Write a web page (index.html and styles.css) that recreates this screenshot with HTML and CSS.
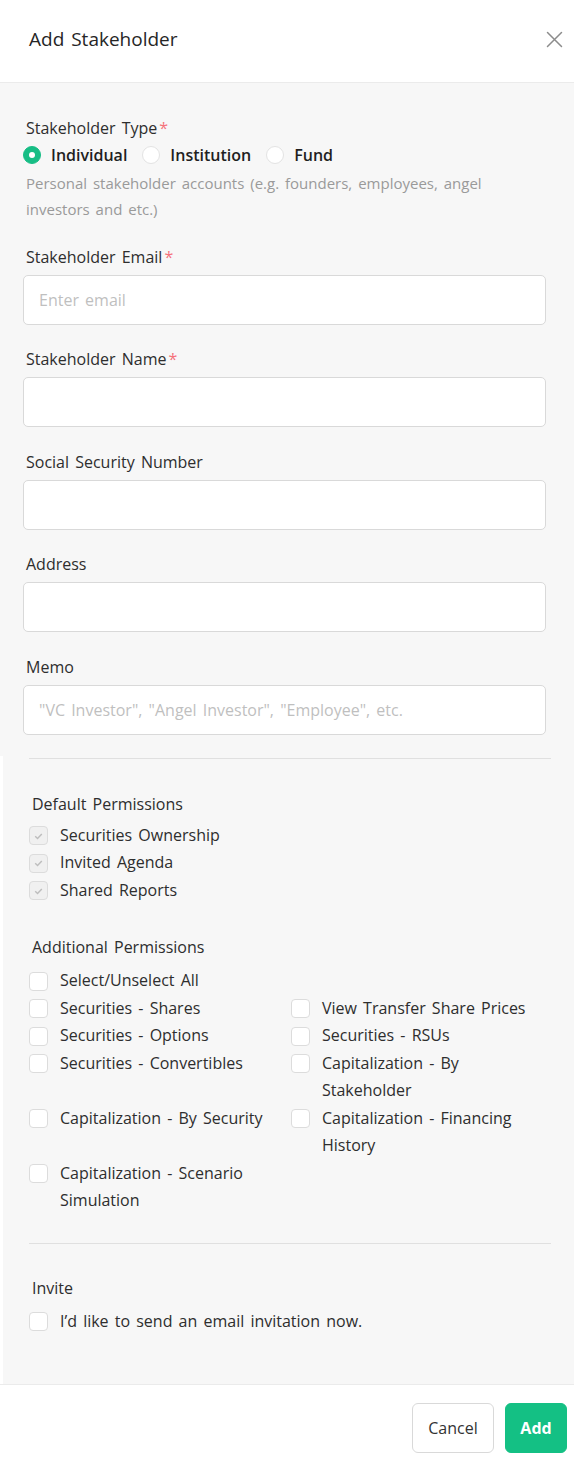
FILE: index.html
```html
<!DOCTYPE html>
<html lang="en">
<head>
<meta charset="utf-8">
<title>Add Stakeholder</title>
<link rel="stylesheet" href="styles.css">
</head>
<body>
<div class="modal">
  <header class="modal-header">
    <h1 class="modal-title">Add Stakeholder</h1>
    <button class="close-btn" type="button" aria-label="Close">
      <svg width="17" height="17" viewBox="0 0 17 17"><path d="M1.5 1.5 L15.5 15.5 M15.5 1.5 L1.5 15.5" stroke="#8c8c8c" stroke-width="1.5" fill="none" stroke-linecap="round"/></svg>
    </button>
  </header>

  <div class="form-main">
    <div class="field-label">Stakeholder Type<span class="req">*</span></div>
    <div class="radio-group">
      <label class="radio-item"><span class="radio checked"></span><span class="radio-text">Individual</span></label>
      <label class="radio-item"><span class="radio"></span><span class="radio-text">Institution</span></label>
      <label class="radio-item"><span class="radio"></span><span class="radio-text">Fund</span></label>
    </div>
    <p class="help">Personal stakeholder accounts (e.g. founders, employees, angel investors and etc.)</p>

    <div class="field">
      <div class="field-label">Stakeholder Email<span class="req">*</span></div>
      <div class="input"><span class="placeholder">Enter email</span></div>
    </div>
    <div class="field">
      <div class="field-label">Stakeholder Name<span class="req">*</span></div>
      <div class="input"></div>
    </div>
    <div class="field">
      <div class="field-label">Social Security Number</div>
      <div class="input"></div>
    </div>
    <div class="field">
      <div class="field-label">Address</div>
      <div class="input"></div>
    </div>
    <div class="field">
      <div class="field-label">Memo</div>
      <div class="input"><span class="placeholder">"VC Investor", "Angel Investor", "Employee", etc.</span></div>
    </div>
  </div>

  <div class="form-perms">
    <hr class="divider">
    <div class="group-title first">Default Permissions</div>
    <div class="check-list">
      <div class="check-item"><span class="checkbox disabled"><svg viewBox="0 0 18 18" width="18" height="18"><path d="M5.5 9.2 L8 11.6 L12.5 6.8" stroke="#bdbdbd" stroke-width="1.5" fill="none"/></svg></span><span class="check-text">Securities Ownership</span></div>
      <div class="check-item"><span class="checkbox disabled"><svg viewBox="0 0 18 18" width="18" height="18"><path d="M5.5 9.2 L8 11.6 L12.5 6.8" stroke="#bdbdbd" stroke-width="1.5" fill="none"/></svg></span><span class="check-text">Invited Agenda</span></div>
      <div class="check-item"><span class="checkbox disabled"><svg viewBox="0 0 18 18" width="18" height="18"><path d="M5.5 9.2 L8 11.6 L12.5 6.8" stroke="#bdbdbd" stroke-width="1.5" fill="none"/></svg></span><span class="check-text">Shared Reports</span></div>
    </div>

    <div class="group-title additional">Additional Permissions</div>
    <div class="check-item"><span class="checkbox"></span><span class="check-text">Select/Unselect All</span></div>
    <div class="check-grid">
      <div class="check-item"><span class="checkbox"></span><span class="check-text">Securities - Shares</span></div>
      <div class="check-item"><span class="checkbox"></span><span class="check-text">View Transfer Share Prices</span></div>
      <div class="check-item"><span class="checkbox"></span><span class="check-text">Securities - Options</span></div>
      <div class="check-item"><span class="checkbox"></span><span class="check-text">Securities - RSUs</span></div>
      <div class="check-item"><span class="checkbox"></span><span class="check-text">Securities - Convertibles</span></div>
      <div class="check-item"><span class="checkbox"></span><span class="check-text">Capitalization - By Stakeholder</span></div>
      <div class="check-item"><span class="checkbox"></span><span class="check-text">Capitalization - By Security</span></div>
      <div class="check-item"><span class="checkbox"></span><span class="check-text">Capitalization - Financing History</span></div>
      <div class="check-item"><span class="checkbox"></span><span class="check-text">Capitalization - Scenario Simulation</span></div>
    </div>

    <hr class="divider second">
    <div class="group-title invite">Invite</div>
    <div class="check-item"><span class="checkbox"></span><span class="check-text">I’d like to send an email invitation now.</span></div>
  </div>

  <footer class="modal-footer">
    <button class="btn btn-default" type="button">Cancel</button>
    <button class="btn btn-primary" type="button">Add</button>
  </footer>
</div>
</body>
</html>
```

FILE: styles.css
```css
* { box-sizing: border-box; }

html, body {
  margin: 0;
  padding: 0;
  background: #ffffff;
}

body {
  font-family: "Open Sans", "Noto Sans", "Noto Sans CJK KR", sans-serif;
  font-size: 16px;
  word-spacing: 2px;
  color: #333333;
}

.modal {
  width: 574px;
  background: #ffffff;
}

.modal-header {
  height: 83px;
  border-bottom: 1px solid #ebebeb;
  display: flex;
  align-items: center;
  justify-content: space-between;
  padding: 0 8px 4px 29px;
}

.modal-title {
  margin: 0;
  font-size: 19px;
  font-weight: 400;
  color: #262626;
  line-height: 26px;
}

.close-btn {
  border: none;
  background: none;
  padding: 0;
  width: 24px;
  height: 24px;
  display: flex;
  align-items: center;
  justify-content: center;
  cursor: pointer;
}

.form-main {
  background: #f7f7f7;
  padding: 33px 28px 21px 23px;
}

.field-label {
  line-height: 24px;
  padding-left: 3px;
  color: #2e2e2e;
}

.req {
  color: #f5727a;
  margin-left: 2px;
}

.radio-group {
  display: flex;
  align-items: center;
  gap: 15px;
  height: 24px;
  margin-top: 3px;
}

.radio-item {
  display: flex;
  align-items: center;
  gap: 10px;
}

.radio {
  width: 18px;
  height: 18px;
  border-radius: 50%;
  background: #ffffff;
  border: 1px solid #e3e3e3;
  position: relative;
}

.radio.checked {
  background: #17bd85;
  border-color: #17bd85;
}

.radio.checked::after {
  content: "";
  position: absolute;
  left: 5px;
  top: 5px;
  width: 6px;
  height: 6px;
  border-radius: 50%;
  background: #ffffff;
}

.radio-text {
  font-weight: 600;
  word-spacing: 0;
  color: #1f1f1f;
}

.help {
  margin: 3px 0 0;
  padding-left: 3px;
  font-size: 15px;
  line-height: 26px;
  color: #9a9a9a;
}

.field {
  margin-top: 22.5px;
}

.input {
  margin-top: 6px;
  height: 50px;
  background: #ffffff;
  border: 1px solid #d9d9d9;
  border-radius: 5px;
  display: flex;
  align-items: center;
  padding: 0 15px;
}

.placeholder {
  color: #bfbfbf;
}

.form-perms {
  background: #f7f7f7;
  margin-left: 3px;
  padding: 2px 23px 49px 26px;
}

.divider {
  border: none;
  border-top: 1px solid #e0e0e0;
  margin: 0;
}

.divider.second {
  margin-top: 28px;
}

.group-title {
  line-height: 24px;
  padding-left: 3px;
  margin-top: 33px;
  margin-bottom: 6px;
  color: #2e2e2e;
}

.group-title.additional {
  margin-top: 31px;
  margin-bottom: 8px;
}

.group-title.invite {
  margin-top: 32px;
  margin-bottom: 8px;
}

.check-item {
  display: flex;
  align-items: flex-start;
  gap: 12px;
  line-height: 27.5px;
}

.checkbox {
  flex: 0 0 19px;
  width: 19px;
  height: 19px;
  margin-top: 4.5px;
  background: #ffffff;
  border: 1px solid #dcdcdc;
  border-radius: 4px;
  display: flex;
  align-items: center;
  justify-content: center;
}

.checkbox.disabled {
  background: #f0f0f0;
  border-color: #dcdcdc;
}

.checkbox svg {
  display: block;
}

.check-text {
  color: #2e2e2e;
}

.check-grid {
  display: grid;
  grid-template-columns: 262px 1fr;
}

.modal-footer {
  border-top: 1px solid #ebebeb;
  display: flex;
  justify-content: flex-end;
  gap: 11px;
  padding: 18px 7px 16px 0;
}

.btn {
  height: 50px;
  border-radius: 6px;
  font-family: inherit;
  font-size: 16px;
  padding: 0;
  cursor: pointer;
}

.btn-default {
  width: 82px;
  background: #ffffff;
  border: 1px solid #d9d9d9;
  color: #333333;
}

.btn-primary {
  width: 62px;
  background: #14c084;
  border: 1px solid #14c084;
  color: #ffffff;
  font-weight: 700;
}
```
